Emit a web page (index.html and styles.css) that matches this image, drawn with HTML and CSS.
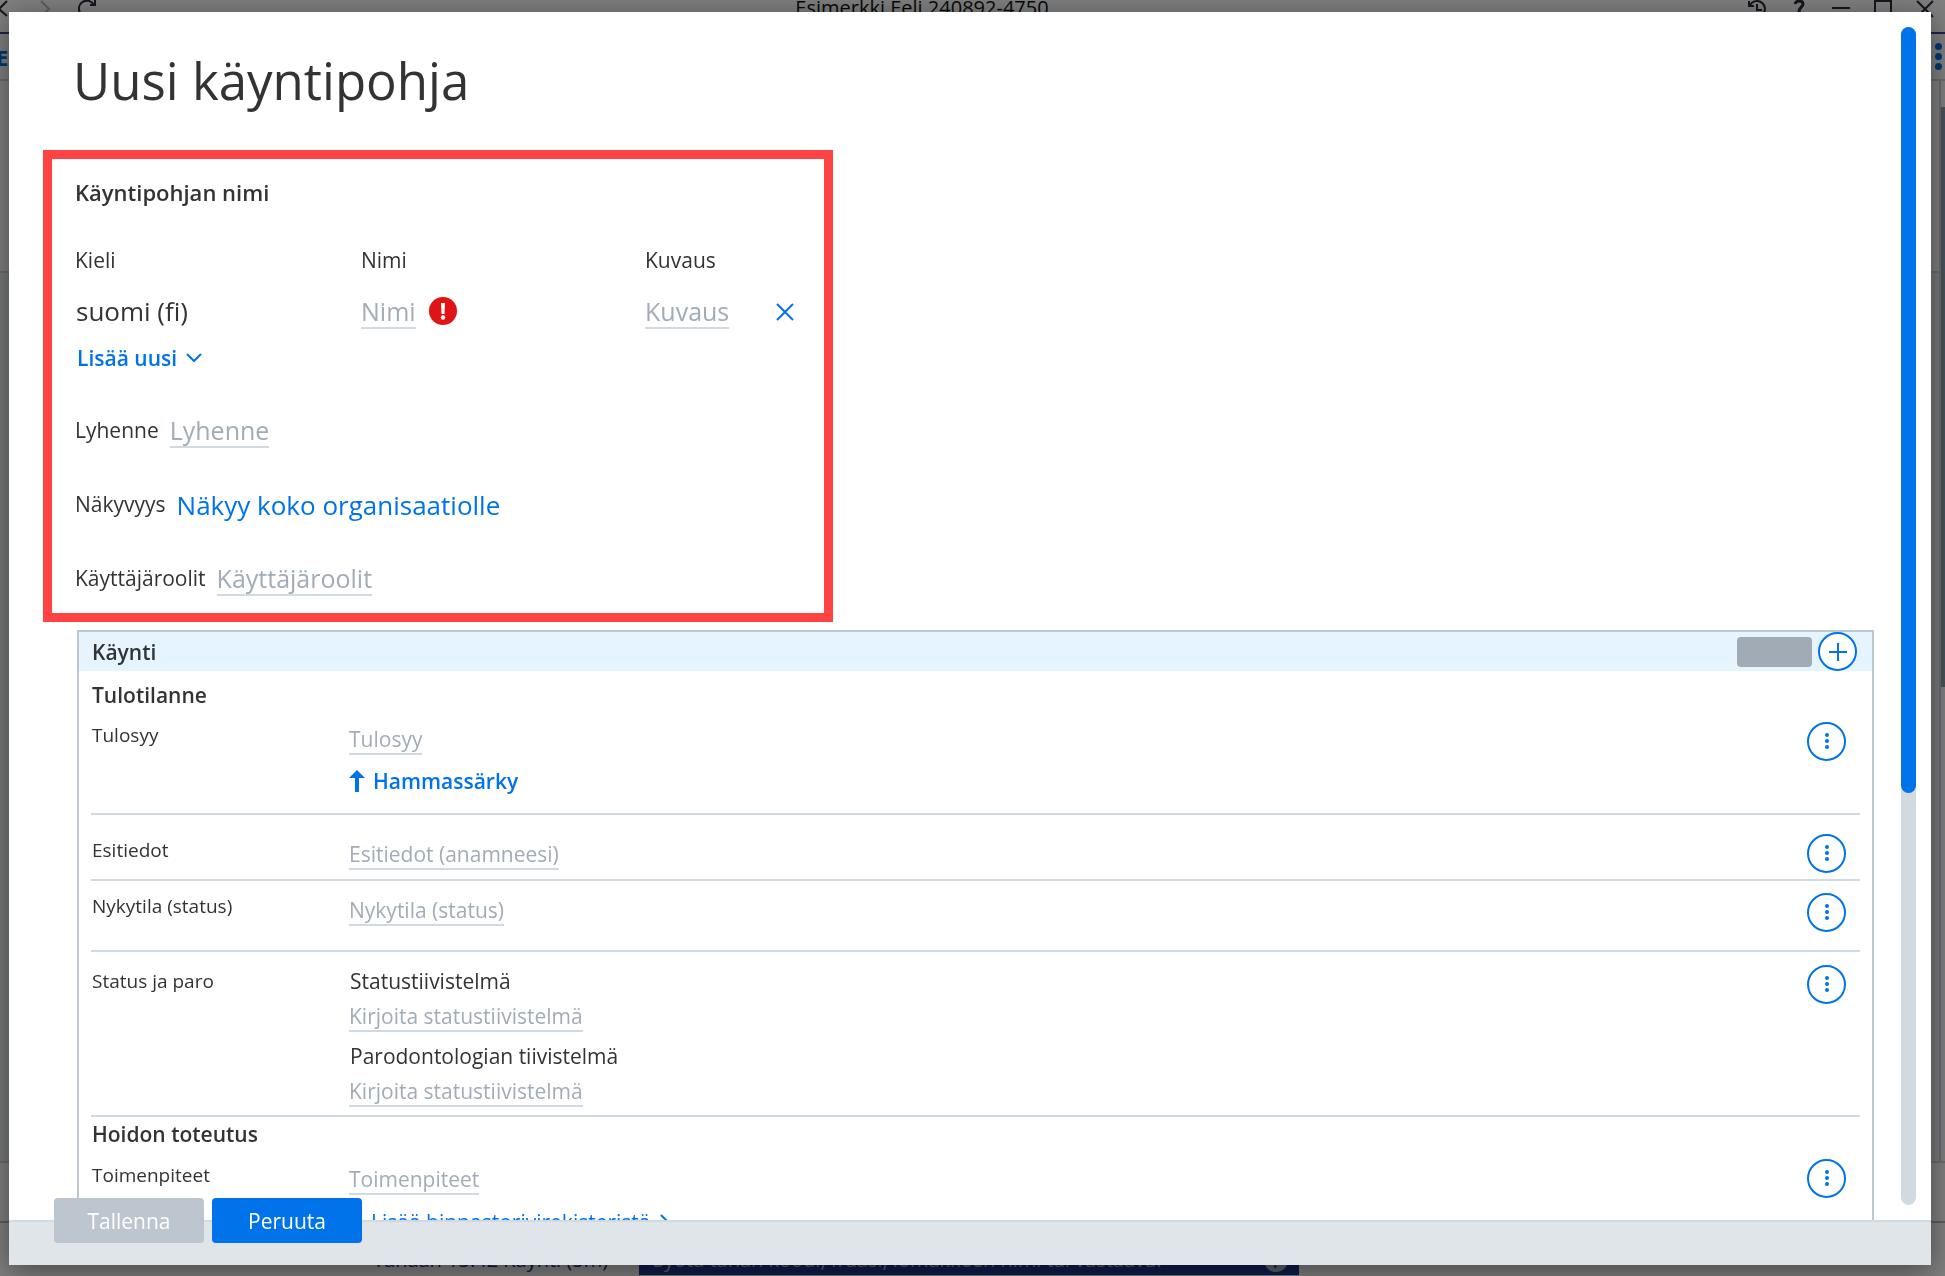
FILE: index.html
```html
<!DOCTYPE html>
<html lang="fi">
<head>
    <meta charset="UTF-8">
    <meta name="viewport" content="width=device-width, initial-scale=1.0">
    <title>Uusi käyntipohja</title>
    <link rel="stylesheet" href="styles.css">
</head>
<body>
    <!-- Potilasnäkymä taustalla -->
    <div class="app">
        <header class="titlebar">
            <div class="titlebar-icons titlebar-nav">
                <svg viewBox="0 0 18 18"><path d="M13 1 L5 9 L13 16"/></svg>
                <svg class="faded" viewBox="0 0 18 18"><path d="M5 1 L13 9 L5 16"/></svg>
                <svg viewBox="0 0 18 18"><path d="M4 15 A8 8 0 1 1 16 5 M17 0 V5 H12"/></svg>
            </div>
            <span class="patient">Esimerkki Eeli 240892-4750</span>
            <div class="titlebar-icons">
                <svg viewBox="0 0 18 18"><path d="M2 5 A8 8 0 1 1 2 13 M1 1 V6 H6 M9 4 V10 H14"/></svg>
                <svg viewBox="0 0 18 18"><path class="thick" d="M5 4 C6 0 13 0 13 4 C13 7 9 7 9 12 M9 15 V17"/></svg>
                <svg viewBox="0 0 18 18"><path d="M0 8 H18"/></svg>
                <svg viewBox="0 0 18 18"><path d="M1 1 H17 V17 H1 Z"/></svg>
                <svg viewBox="0 0 18 18"><path d="M1 1 L17 17 M17 1 L1 17"/></svg>
            </div>
        </header>
        <div class="toolbar">
            <b>E</b>
            <svg class="toolbar-dots" viewBox="0 0 7 27"><circle cx="3.500" cy="3.500" r="3.500"/><circle cx="3.500" cy="13.500" r="3.500"/><circle cx="3.500" cy="23.500" r="3.500"/></svg>
        </div>
        <div class="app-main">
            <div class="app-content">
                <div class="app-top"></div>
                <div class="app-list"></div>
            </div>
            <div class="app-scroll"><div class="app-thumb"></div></div>
        </div>
        <footer class="dock">
            <div class="dock-top"></div>
            <div class="dock-row">
                <label for="koodi">Tänään 13:42 Käynti (5m)</label>
                <div class="dock-search">
                    <input id="koodi" type="text" placeholder="Syötä tähän koodi, fraasi, lomakkeen nimi tai vastaava.">
                    <span class="help">?</span>
                </div>
            </div>
        </footer>
    </div>

    <div class="overlay">
        <div class="modal" role="dialog" aria-labelledby="otsikko">
            <div class="modal-body">
                <div class="modal-content">
                    <h1 id="otsikko">Uusi käyntipohja</h1>

                    <section class="basics">
                        <h2>Käyntipohjan nimi</h2>
                        <div class="names">
                            <span class="name-head">Kieli</span>
                            <label class="name-head" for="nimi">Nimi</label>
                            <label class="name-head" for="kuvaus">Kuvaus</label>
                            <span></span>
                            <span class="language">suomi (fi)</span>
                            <div class="name-cell">
                                <input class="field large" id="nimi" type="text" size="3" placeholder="Nimi">
                                <svg class="alert" viewBox="0 0 28 28"><circle cx="14" cy="14" r="14" fill="#e01414"/><path d="M12 6 H16 L15.500 17 H12.500 Z" fill="#fff"/><circle cx="14" cy="20.500" r="2.200" fill="#fff"/></svg>
                            </div>
                            <div class="name-cell">
                                <input class="field large" id="kuvaus" type="text" size="5" placeholder="Kuvaus">
                            </div>
                            <button class="remove" type="button" aria-label="Poista">
                                <svg viewBox="0 0 18 18"><path d="M1 1 L17 17 M17 1 L1 17"/></svg>
                            </button>
                        </div>
                        <button class="add-language" type="button">Lisää uusi
                            <svg viewBox="0 0 16 10"><path d="M1 1 L8 8 L15 1"/></svg>
                        </button>
                        <div class="setting">
                            <label for="lyhenne">Lyhenne</label>
                            <input class="field large" id="lyhenne" type="text" size="7" placeholder="Lyhenne">
                        </div>
                        <div class="setting">
                            <span>Näkyvyys</span>
                            <button class="visibility" type="button">Näkyy koko organisaatiolle</button>
                        </div>
                        <div class="setting">
                            <label for="roolit">Käyttäjäroolit</label>
                            <input class="field large" id="roolit" type="text" size="12" placeholder="Käyttäjäroolit">
                        </div>
                    </section>

                    <section class="visit">
                        <header class="visit-head">
                            <h2>Käynti</h2>
                            <span class="chip"></span>
                            <button class="round" type="button" aria-label="Lisää">
                                <svg class="plus" viewBox="0 0 18 18"><path d="M9 0 V18 M0 9 H18"/></svg>
                            </button>
                        </header>
                        <div class="visit-body">
                            <h3 class="first">Tulotilanne</h3>
                            <div class="row row-reason">
                                <label for="tulosyy">Tulosyy</label>
                                <div class="value">
                                    <input class="field" id="tulosyy" type="text" size="6" placeholder="Tulosyy">
                                    <a class="pick" href="#"><svg viewBox="0 0 16 22"><path d="M8 0 L16 8 H10 V22 H6 V8 H0 Z"/></svg>Hammassärky</a>
                                </div>
                                <button class="round" type="button" aria-label="Toiminnot"><svg class="dots" viewBox="0 0 4 18"><circle cx="2" cy="2" r="2"/><circle cx="2" cy="8" r="2"/><circle cx="2" cy="14" r="2"/></svg></button>
                            </div>
                            <div class="row row-history">
                                <label class="low" for="esitiedot">Esitiedot</label>
                                <div class="value low">
                                    <input class="field" id="esitiedot" type="text" size="18" placeholder="Esitiedot (anamneesi)">
                                </div>
                                <button class="round" type="button" aria-label="Toiminnot"><svg class="dots" viewBox="0 0 4 18"><circle cx="2" cy="2" r="2"/><circle cx="2" cy="8" r="2"/><circle cx="2" cy="14" r="2"/></svg></button>
                            </div>
                            <div class="row row-status">
                                <label for="nykytila">Nykytila (status)</label>
                                <div class="value">
                                    <input class="field" id="nykytila" type="text" size="14" placeholder="Nykytila (status)">
                                </div>
                                <button class="round" type="button" aria-label="Toiminnot"><svg class="dots" viewBox="0 0 4 18"><circle cx="2" cy="2" r="2"/><circle cx="2" cy="8" r="2"/><circle cx="2" cy="14" r="2"/></svg></button>
                            </div>
                            <div class="row row-paro">
                                <span class="low">Status ja paro</span>
                                <div class="value stacked">
                                    <label for="status-tiivistelma">Statustiivistelmä</label>
                                    <input class="field" id="status-tiivistelma" type="text" size="20" placeholder="Kirjoita statustiivistelmä">
                                    <label for="paro-tiivistelma">Parodontologian tiivistelmä</label>
                                    <input class="field" id="paro-tiivistelma" type="text" size="20" placeholder="Kirjoita statustiivistelmä">
                                </div>
                                <button class="round" type="button" aria-label="Toiminnot"><svg class="dots" viewBox="0 0 4 18"><circle cx="2" cy="2" r="2"/><circle cx="2" cy="8" r="2"/><circle cx="2" cy="14" r="2"/></svg></button>
                            </div>
                            <h3>Hoidon toteutus</h3>
                            <div class="row row-care">
                                <label class="low" for="toimenpiteet">Toimenpiteet</label>
                                <div class="value low">
                                    <input class="field" id="toimenpiteet" type="text" size="11" placeholder="Toimenpiteet">
                                    <a class="registry" href="#">Lisää hinnastorivirekisteristä <svg viewBox="0 0 10 16"><path d="M1 1 L8 8 L1 15"/></svg></a>
                                </div>
                                <button class="round" type="button" aria-label="Toiminnot"><svg class="dots" viewBox="0 0 4 18"><circle cx="2" cy="2" r="2"/><circle cx="2" cy="8" r="2"/><circle cx="2" cy="14" r="2"/></svg></button>
                            </div>
                        </div>
                    </section>
                </div>
                <div class="scrollbar"><div class="thumb"></div></div>
            </div>
            <footer class="modal-footer">
                <button class="btn" type="button" disabled>Tallenna</button>
                <button class="btn primary" type="button">Peruuta</button>
            </footer>
        </div>
    </div>
</body>
</html>
```

FILE: styles.css
```css
* {
    box-sizing: border-box;
}
body {
    margin: 0;
    height: 100vh;
    overflow: hidden;
    font-family: "Segoe UI", "Open Sans", sans-serif;
    font-size: 21px;
    line-height: 32px;
    color: #333;
}
h1, h2, h3 {
    margin: 0;
    font-weight: 600;
}
button, input {
    margin: 0;
    padding: 0;
    border: 0;
    background: none;
    font: inherit;
    color: inherit;
}
button {
    cursor: pointer;
}
a {
    color: #0073eb;
    text-decoration: none;
}
svg {
    display: block;
    flex: none;
    fill: none;
    stroke: #0073eb;
    stroke-width: 2;
}

/* tausta */
.app {
    display: flex;
    flex-direction: column;
    height: 100%;
    background: #fff;
}
.titlebar {
    display: flex;
    justify-content: space-between;
    height: 34px;
    padding-right: 11px;
    border-bottom: 2px solid #3a4a94;
    line-height: 16px;
    color: #111;
}
.patient {
    font-size: 20px;
}
.titlebar-icons {
    display: flex;
    gap: 24px;
}
.titlebar-nav {
    margin-left: -6px;
}
.titlebar-icons svg {
    width: 18px;
    height: 18px;
    stroke: #27303a;
}
.titlebar-icons .thick {
    stroke-width: 3;
}
.titlebar-icons .faded {
    stroke: #b4bfca;
}
.toolbar {
    display: flex;
    align-items: center;
    justify-content: space-between;
    height: 47px;
    padding-right: 3px;
    border-bottom: 2px solid #d2d8de;
    font-size: 22px;
    color: #0073eb;
}
.toolbar b {
    margin-left: -4px;
}
.toolbar-dots {
    width: 7px;
    height: 27px;
    fill: #0073eb;
    stroke: none;
}
.app-main {
    display: flex;
    flex: 1;
}
.app-content {
    display: flex;
    flex: 1;
    flex-direction: column;
    border-right: 2px solid #d2d8de;
}
.app-top {
    height: 192px;
    border-bottom: 2px solid #d2d8de;
}
.app-list {
    flex: 1;
    background: #eef0f5;
}
.app-scroll {
    width: 4px;
    padding-top: 26px;
}
.app-thumb {
    height: 55%;
    background: #93a5b3;
}
.dock {
    border-top: 2px solid #d6d6d6;
}
.dock-top {
    height: 60px;
    border-bottom: 2px solid #b4bcc8;
}
.dock-row {
    display: flex;
    align-items: flex-end;
    gap: 28px;
    height: 53px;
    padding: 0 0 1px 373px;
    line-height: 30px;
}
.dock-row label {
    width: 238px;
    font-size: 20px;
    color: #1c2f6e;
    white-space: nowrap;
}
.dock-search {
    display: flex;
    align-items: center;
    width: 660px;
    height: 30px;
    padding: 0 11px 0 14px;
    background: #1f3894;
}
.dock-search input {
    flex: 1;
    font-size: 20px;
}
.dock-search input::placeholder {
    color: #b4bfca;
    opacity: 1;
}
.help {
    width: 24px;
    height: 24px;
    border-radius: 50%;
    background: #b4bfca;
    line-height: 24px;
    text-align: center;
    color: #1f3894;
}

/* dialogi */
.overlay {
    position: fixed;
    inset: 0;
    display: flex;
    padding: 12px 14px 11px 9px;
    background: rgba(0, 0, 0, .5);
}
.modal {
    display: flex;
    flex: 1;
    flex-direction: column;
    min-width: 0;
    background: #fff;
    box-shadow: 0 6px 28px rgba(0, 0, 0, .45);
}
.modal-body {
    display: flex;
    flex: 1;
    min-height: 0;
}
.modal-content {
    flex: 1;
    min-width: 0;
    overflow: hidden;
    padding: 38px 27px 0 34px;
}
.scrollbar {
    width: 15px;
    margin: 15px 15px 15px 0;
    border-radius: 8px;
    background: #d2dae1;
}
.thumb {
    height: 65%;
    border-radius: 8px;
    background: #0073eb;
}
h1 {
    margin: 0 0 40px 30px;
    font-size: 51px;
    font-weight: 400;
    line-height: 60px;
}
.field {
    display: block;
    height: 30px;
    border-bottom: 2px solid #d2dae1;
    line-height: 28px;
    field-sizing: content;
}
.field.large {
    height: 34px;
    font-size: 25px;
    line-height: 32px;
}
.field::placeholder {
    color: #a1acb8;
    opacity: 1;
}

/* perustiedot */
.basics {
    max-width: 790px;
    padding: 17px 23px;
    border: 9px solid #ff4343;
}
.basics h2 {
    font-size: 22px;
}
.names {
    display: grid;
    grid-template-columns: 286px 284px 131px auto;
    justify-content: start;
    align-items: start;
    row-gap: 19px;
    margin-top: 36px;
}
.name-cell {
    display: flex;
    gap: 13px;
}
.language {
    padding-left: 1px;
    font-size: 26px;
}
.alert {
    width: 28px;
    height: 28px;
    margin-top: 2px;
    stroke: none;
}
.remove svg {
    width: 18px;
    height: 18px;
    margin-top: 8px;
}
.add-language {
    display: flex;
    align-items: center;
    gap: 9px;
    margin-top: 13px;
    padding-left: 2px;
    font-weight: 600;
    color: #0073eb;
}
.add-language svg {
    width: 16px;
    height: 10px;
}
.setting {
    display: flex;
    gap: 11px;
    height: 34px;
    margin-top: 40px;
}
.visibility {
    font-size: 26px;
    color: #0073eb;
}

/* käynti */
.visit {
    margin: 8px 0 0 34px;
    border: 2px solid #bdc7d1;
}
.visit-head {
    display: flex;
    align-items: center;
    gap: 6px;
    height: 39px;
    padding: 0 15px 0 13px;
    background: #e6f4ff;
}
.visit-head h2 {
    flex: 1;
    font-size: 21px;
}
.chip {
    width: 75px;
    height: 30px;
    border-radius: 4px;
    background: #a0abb5;
}
.round {
    display: flex;
    align-items: center;
    justify-content: center;
    width: 39px;
    height: 39px;
    border: 2px solid #0073eb;
    border-radius: 50%;
    background: #fff;
}
.plus {
    width: 18px;
    height: 18px;
}
.dots {
    width: 4px;
    height: 18px;
    fill: #0073eb;
    stroke: none;
}
.visit-body {
    padding: 0 12px;
}
h3 {
    padding: 1px 0 0 1px;
    font-size: 21px;
}
h3.first {
    padding-top: 8px;
}
.row {
    display: grid;
    grid-template-columns: 257px 1fr auto;
    align-items: start;
    padding: 11px 14px 0 1px;
    border-bottom: 2px solid #d2dae1;
}
.row > label,
.row > span {
    font-size: 19px;
    line-height: 26px;
}
.row > .low {
    padding-top: 3px;
}
.value {
    padding-top: 3px;
}
.row > .value.low {
    padding-top: 6px;
}
.row-reason {
    padding-bottom: 16px;
}
.row-history {
    padding-top: 19px;
    padding-bottom: 6px;
}
.row-status {
    padding-top: 12px;
    padding-bottom: 18px;
}
.row-paro {
    padding-top: 13px;
    padding-bottom: 8px;
}
.row-care {
    padding-top: 9px;
}
.pick {
    display: flex;
    align-items: center;
    gap: 8px;
    margin-top: 10px;
    font-weight: 600;
}
.pick svg {
    width: 16px;
    height: 22px;
    fill: #0073eb;
    stroke: none;
}
.stacked {
    padding-top: 0;
}
.stacked label {
    display: block;
    margin-bottom: 5px;
    padding-left: 1px;
}
.stacked .field + label {
    margin-top: 8px;
}
.registry {
    display: flex;
    align-items: center;
    gap: 9px;
    margin-top: 11px;
    padding-left: 22px;
}
.registry svg {
    width: 10px;
    height: 16px;
}

.modal-footer {
    display: flex;
    gap: 8px;
    height: 45px;
    padding-left: 45px;
    border-top: 2px solid #d2dae1;
    background: #e0e5e9;
}
.btn {
    width: 150px;
    height: 45px;
    margin-top: -24px;
    border-radius: 4px;
    background: #bdc5cf;
    color: #fff;
}
.btn.primary {
    background: #0073eb;
}
```
